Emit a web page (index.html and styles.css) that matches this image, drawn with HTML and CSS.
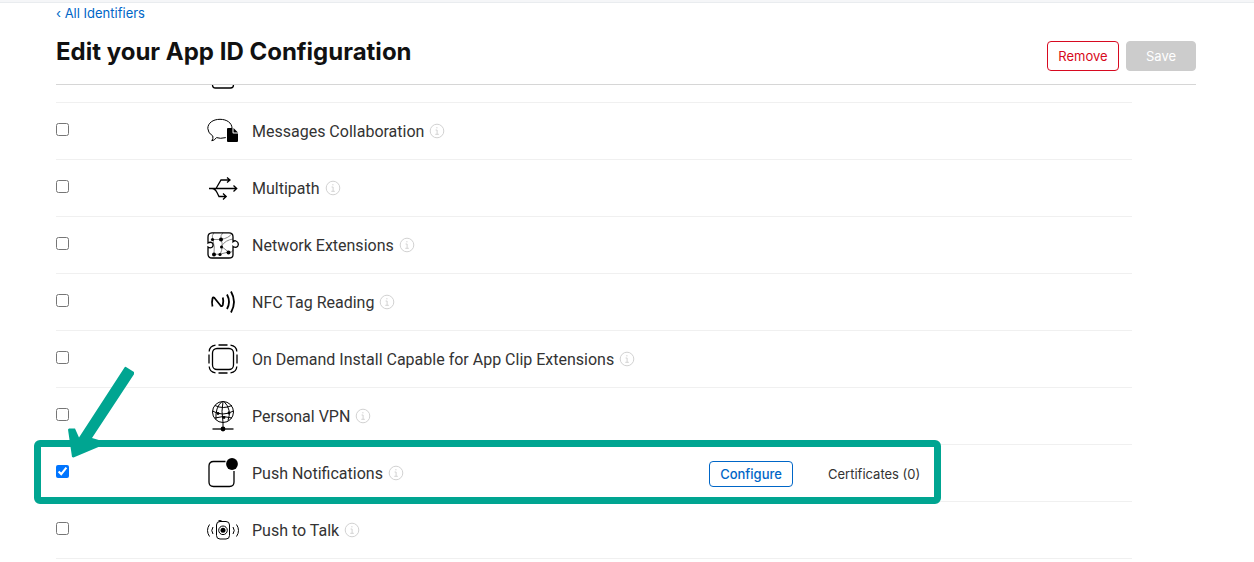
FILE: index.html
```html
<!DOCTYPE html>
<html lang="en">
<head>
<meta charset="utf-8">
<title>Edit your App ID Configuration</title>
<link rel="stylesheet" href="styles.css">
</head>
<body>
<svg class="defs" aria-hidden="true">
  <symbol id="info" viewBox="0 0 16 16"><circle cx="8" cy="8" r="6.8" fill="none" stroke="currentColor"/><path d="M7.9 4.1v1.3M6.6 7h1.5v4.2M6.3 11.3h3.5" fill="none" stroke="currentColor"/></symbol>
</svg>
<div class="topbar"></div>
<div class="page">
  <header class="header">
    <a class="back" href="#">‹ All Identifiers</a>
    <div class="title-bar">
      <h1 class="title">Edit your App ID Configuration</h1>
      <div class="buttons">
        <button class="btn btn-remove" type="button">Remove</button>
        <button class="btn btn-save" type="button" disabled>Save</button>
      </div>
    </div>
  </header>
  <main class="list">
    <div class="row row-clipped">
      <svg class="icon" viewBox="0 0 32 32"><rect x="5.5" y="-10" width="21" height="28" rx="3" class="line"/></svg>
    </div>
    <div class="row">
      <input class="check" type="checkbox" id="messages">
      <svg class="icon" viewBox="0 0 32 32"><path class="thin" d="M18.8 22.6Q13 24 9.5 22.6Q7.5 25.5 4.8 25.8Q6.5 23.5 5.8 21Q.8 18 .8 13.5C.8 8 6 4.3 13 4.3S24.8 8 25 13"/><path d="M21 13h4.500v4.500q0 1 1 1H31V26q0 1-1 1h-9q-1 0-1-1V14q0-1 1-1zM26.500 13l4.500 4.500h-4.500z"/></svg>
      <div class="name"><label for="messages">Messages Collaboration</label><svg class="info"><use href="#info"/></svg></div>
    </div>
    <div class="row">
      <input class="check" type="checkbox" id="multipath">
      <svg class="icon" viewBox="0 0 32 32"><path class="line" d="M2 16.500h28M26.500 13.500l3.200 3-3.200 3M9 16.500l5-8.500h9M20 5.500L23 8l-3 2.500M5 16.500q3 0 5 4l2 4h7M16 21.500l3.200 3-3.200 3"/></svg>
      <div class="name"><label for="multipath">Multipath</label><svg class="info"><use href="#info"/></svg></div>
    </div>
    <div class="row">
      <input class="check" type="checkbox" id="network">
      <svg class="icon" viewBox="0 0 32 32"><path class="faint" d="M7 3.500q-3 3-1 7.500 2 7 1 14M16 3.500q-3 3-2 7 3 7-1 15M14 10.500Q22 9 25 4.500M14.500 17q4-6 11.500-7M14 17l7.500 6q3 1 5-2M7 25.500q7 0 14.500-2.500M5 10.500h9"/><path class="line" d="M5 3.800h17q4 0 4 4v5q1.500-1.500 3-.8 2.500 1 2.300 3.500-.5 3.300-3.500 2.700-1-.2-1.800-.8V26q0 3-4 3H5q-4 0-4-4v-7q2 1.500 4 .3 2-1.800.4-4.300-2-1.500-4.400 0V8q0-4 4-4.200z"/><circle cx="5.500" cy="10.500" r="1.600"/><circle cx="14" cy="10.500" r="2"/><circle cx="14.500" cy="18" r="1.500"/><circle cx="21.500" cy="23.500" r="2"/><circle cx="7" cy="25.500" r="2"/><circle cx="13" cy="25.500" r="1.600"/></svg>
      <div class="name"><label for="network">Network Extensions</label><svg class="info"><use href="#info"/></svg></div>
    </div>
    <div class="row">
      <input class="check" type="checkbox" id="nfc">
      <svg class="icon" viewBox="0 0 32 32"><path class="bold" d="M5.500 20.500q-1-4 0-8 .5-2 2-.5l6 7.500q1.500 1.500 2.300-.5 1-4 0-7.500M20 8.500q4 7.500 0 14.500M24 5.500q6 10.500 0 21"/></svg>
      <div class="name"><label for="nfc">NFC Tag Reading</label><svg class="info"><use href="#info"/></svg></div>
    </div>
    <div class="row">
      <input class="check" type="checkbox" id="ondemand">
      <svg class="icon" viewBox="0 0 32 32"><rect x="5.500" y="5.500" width="21" height="21" rx="4.500" class="line"/><path class="line" d="M11.500 2h9M11.500 30h9M2 11.500v9M30 11.500v9M2.200 8.500Q2.500 3 8.500 2.200M23.500 2.200Q29.500 3 29.800 8.500M29.800 23.500Q29.500 29 23.500 29.800M8.500 29.800Q2.500 29 2.200 23.500"/></svg>
      <div class="name"><label for="ondemand">On Demand Install Capable for App Clip Extensions</label><svg class="info"><use href="#info"/></svg></div>
    </div>
    <div class="row">
      <input class="check" type="checkbox" id="vpn">
      <svg class="icon" viewBox="0 0 32 32"><circle class="thin" cx="16" cy="12" r="10.500"/><path class="thin" d="M15 1.500q-7 6-6 18M16 1.500q-2 9 0 21M17 1.500q8 8 4 19M8 5.500q8 4 17 0M5.500 11q10 6 21 0M8 18q8-3 17 0M16 22.500V29"/><path class="line" d="M5.500 29h21"/><circle cx="16" cy="29" r="2.400"/><circle cx="11" cy="13.500" r="1.400"/><circle cx="22" cy="13" r="1.400"/><circle cx="17" cy="17.500" r="1.400"/></svg>
      <div class="name"><label for="vpn">Personal VPN</label><svg class="info"><use href="#info"/></svg></div>
    </div>
    <div class="row row-highlighted">
      <input class="check" type="checkbox" id="push" checked>
      <svg class="icon" viewBox="0 0 32 32"><path class="line" d="M18.500 4.500H6.500Q2 4.500 2 9v16q0 4.500 4.500 4.500h16q4.500 0 4.500-4.500V14"/><circle cx="25" cy="7" r="5.900"/></svg>
      <div class="name"><label for="push">Push Notifications</label><svg class="info"><use href="#info"/></svg></div>
      <div class="actions"><button class="btn btn-configure" type="button">Configure</button><span class="certs">Certificates (0)</span></div>
      <div class="frame"></div>
      <svg class="arrow" viewBox="0 0 66 92"><path d="M58 1l8 5q1 .7.300 1.800L24 72l8.500 2.500 1.300 4-1 1.500L5.500 91.500 4 91 0 63.500l1-1h6l4 9L56.500 1.500q.5-1 1.500-.5z"/></svg>
    </div>
    <div class="row">
      <input class="check" type="checkbox" id="talk">
      <svg class="icon" viewBox="0 0 32 32"><rect class="thin" x="9.500" y="7.500" width="13" height="17.500" rx="3.500"/><path class="line" d="M11.500 6.800h3"/><circle class="thin" cx="16" cy="16.300" r="4.300"/><circle cx="16" cy="16.300" r="2.500"/><path class="thin" d="M6 13q-2.500 3.500 0 7M2.500 10.500q-4 6 0 12M26 13q2.500 3.500 0 7M29.500 10.500q4 6 0 12"/></svg>
      <div class="name"><label for="talk">Push to Talk</label><svg class="info"><use href="#info"/></svg></div>
    </div>
  </main>
</div>
</body>
</html>
```
FILE: styles.css
```css
* { box-sizing: border-box; }
body {
  margin: 0;
  background: #fff;
  color: #333;
  font-family: Inter, "Liberation Sans", sans-serif;
  font-size: 13px;
  overflow: hidden;
}
.defs { display: none; }
.topbar { height: 3px; background: #f5f6f8; border-bottom: 1px solid #e9ecef; }
.page { padding: 0 58px 0 56px; }
.header { border-bottom: 1px solid #d6d6d6; padding-bottom: 13px; }
.back {
  display: block;
  width: fit-content;
  line-height: 20px;
  color: #0066c7;
  text-decoration: none;
}
.title-bar { display: flex; justify-content: space-between; align-items: flex-end; height: 48px; }
.title {
  margin: 0;
  padding-bottom: 4px;
  font-size: 24px;
  line-height: 30px;
  font-weight: 700;
  color: #111;
}
.buttons { display: flex; gap: 7px; }
.btn {
  font-family: inherit;
  font-size: 13px;
  border: 1px solid;
  border-radius: 4px;
  background: #fff;
  padding: 0;
}
.btn-remove { width: 72px; height: 30px; color: #d70920; }
.btn-save { width: 70px; height: 30px; color: #fff; background: #ccc; border-color: #ccc; }
.btn-configure { width: 84px; height: 26px; color: #0066c7; font-weight: 500; }
.list { margin-right: 64px; }
.row {
  position: relative;
  display: grid;
  grid-template-columns: 151px 45px 1fr 423px;
  align-items: center;
  height: 57px;
  border-bottom: 1px solid #f0f0f0;
}
.row-clipped { height: 18px; overflow: hidden; align-items: start; }
.row-clipped .icon { grid-column: 2; margin-top: -15px; }
.check { width: 13px; height: 13px; margin: 0 0 3px; }
.icon { width: 32px; height: 32px; }
.line, .thin, .bold, .faint { fill: none; stroke: #000; stroke-width: 1.3; }
.thin { stroke-width: 1; }
.bold { stroke-width: 1.8; }
.faint { stroke: #888; stroke-width: 1; }
.name {
  grid-column: 3 / span 2;
  grid-row: 1;
  display: flex;
  align-items: center;
  gap: 5px;
  font-family: Roboto, "Liberation Sans", sans-serif;
  font-size: 16px;
  white-space: nowrap;
}
.info { width: 16px; height: 16px; color: #d2d2d2; flex: none; }
.actions {
  grid-column: 4;
  grid-row: 1;
  display: flex;
  align-items: center;
  gap: 35px;
  padding-top: 2px;
}
.frame {
  position: absolute;
  inset: -5px 191px -3px -22px;
  border: 7px solid #00a591;
  border-radius: 6px;
  pointer-events: none;
}
.arrow {
  position: absolute;
  left: 12px;
  top: -79px;
  width: 66px;
  height: 92px;
  fill: #00a591;
  pointer-events: none;
}
```
